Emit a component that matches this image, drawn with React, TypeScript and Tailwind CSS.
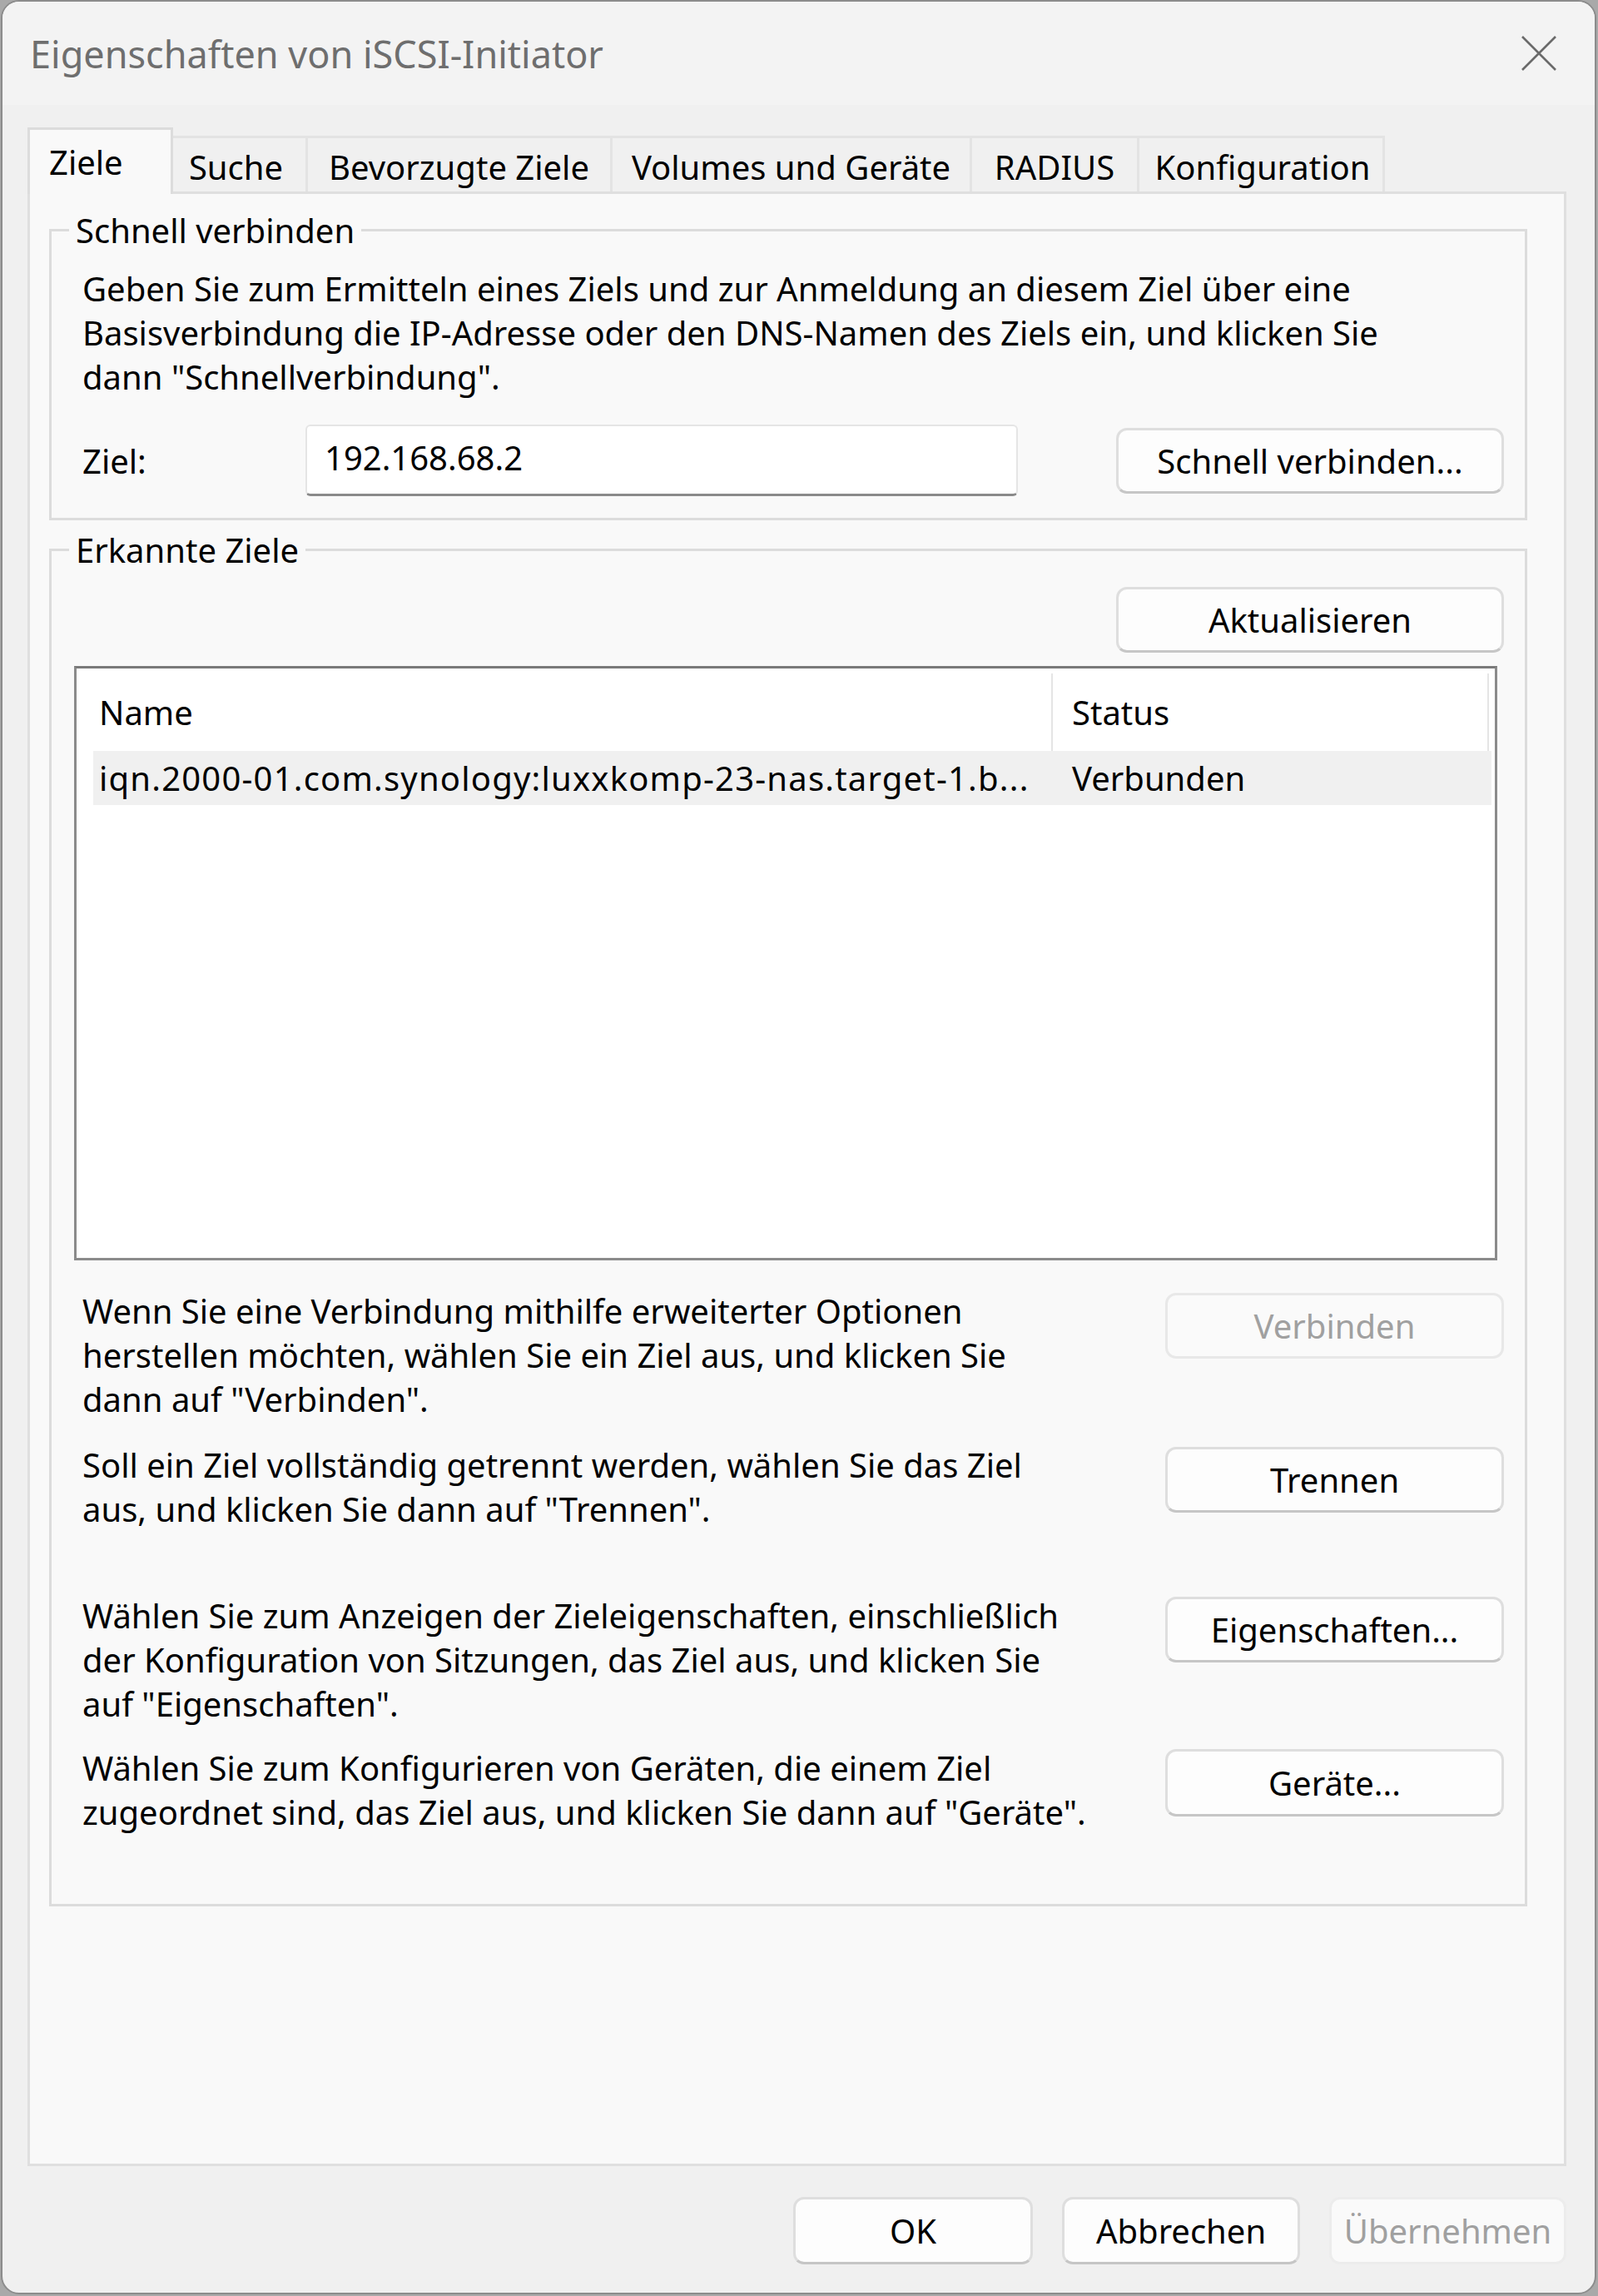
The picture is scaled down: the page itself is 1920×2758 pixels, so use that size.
import type { ReactNode } from "react";

function WinButton({
  children,
  className = "",
  disabled = false,
}: {
  children: ReactNode;
  className?: string;
  disabled?: boolean;
}) {
  return (
    <div
      className={`flex items-center justify-center rounded-[13px] border-[3px] ${
        disabled
          ? "border-[#e8e8e8] bg-[#fafafa] text-[#a0a0a0]"
          : "border-[#dedede] border-b-[#c6c6c6] bg-[#fdfdfd] text-black"
      } ${className}`}
    >
      {children}
    </div>
  );
}

function Tab({ label, className, active = false }: { label: string; className: string; active?: boolean }) {
  if (active) {
    return (
      <div
        className={`relative z-10 -mb-[3px] flex h-[80px] items-center border-[3px] border-b-0 border-[#dcdcdc] bg-[#f9f9f9] ${className}`}
      >
        {label}
      </div>
    );
  }
  return (
    <div
      className={`flex h-[67px] items-center justify-center border-t-[3px] border-r-[3px] border-[#e3e3e3] bg-[#f0f0f0] pt-[4px] ${className}`}
    >
      {label}
    </div>
  );
}

function Group({ title, children, className = "" }: { title: string; children: ReactNode; className?: string }) {
  return (
    <fieldset className={`ml-[23px] w-[1776px] border-[3px] border-[#dcdcdc] ${className}`}>
      <legend className="ml-[21px] px-[8px] leading-[53px]">{title}</legend>
      {children}
    </fieldset>
  );
}

export default function App() {
  return (
    <div className="h-[2758px] w-[1920px] bg-[#a9a9a9] font-['Noto_Sans',sans-serif] text-[40px] leading-[53px] text-black">
      <div className="ml-[1px] h-[2756px] w-[1917px] overflow-hidden rounded-[22px] border-2 border-[#8c8c8c] bg-[#f0f0f0]">
        {/* title bar */}
        <div className="flex h-[124px] items-center justify-between bg-[#f3f3f3] pl-[33px] pr-[46px]">
          <span className="text-[45px] text-[#6e6e6e]">Eigenschaften von iSCSI-Initiator</span>
          <svg width="42" height="42" viewBox="0 0 42 42" fill="none" stroke="#6a6a6a" strokeWidth="2.6">
            <path d="M1 1 L41 41 M41 1 L1 41" />
          </svg>
        </div>

        <div className="pl-[30px] pt-[27px]">
          {/* tabs */}
          <div className="flex items-end">
            <Tab label="Ziele" className="w-[175px] pl-[23px]" active />
            <Tab label="Suche" className="w-[162px] pr-[8px]" />
            <Tab label="Bevorzugte Ziele" className="w-[366px]" />
            <Tab label="Volumes und Geräte" className="w-[432px]" />
            <Tab label="RADIUS" className="w-[201px]" />
            <Tab label="Konfiguration" className="w-[295px] pl-[4px]" />
          </div>

          {/* tab page */}
          <div className="h-[2372px] w-[1849px] border-[3px] border-[#dfdfdf] bg-[#f9f9f9] pt-[17px]">
            <Group title="Schnell verbinden">
              <div className="pl-[37px] pr-[25px] pt-[17px] pb-[26px]">
                <p className="whitespace-nowrap">
                  Geben Sie zum Ermitteln eines Ziels und zur Anmeldung an diesem Ziel über eine
                  <br />
                  Basisverbindung die IP-Adresse oder den DNS-Namen des Ziels ein, und klicken Sie
                  <br />
                  dann "Schnellverbindung".
                </p>
                <div className="mt-[31px] flex items-center">
                  <span className="w-[268px]">Ziel:</span>
                  <div className="flex h-[86px] w-[856px] items-center rounded-[6px] border-2 border-b-[3px] border-[#e5e5e5] border-b-[#8a8a8a] bg-white pb-[6px] pl-[21px]">
                    192.168.68.2
                  </div>
                  <WinButton className="ml-auto h-[79px] w-[466px]">Schnell verbinden...</WinButton>
                </div>
              </div>
            </Group>

            <Group title="Erkannte Ziele" className="mt-[9px]">
              <div className="pl-[27px] pr-[25px] pt-[18px] pb-[84px]">
                <div className="flex justify-end">
                  <WinButton className="h-[79px] w-[466px]">Aktualisieren</WinButton>
                </div>

                {/* list view */}
                <div className="mt-[16px] h-[714px] w-[1710px] border-[3px] border-[#8b8b8b] border-t-[#7a7a7a] bg-white pl-[20px] pr-[4px]">
                  <div className="flex pt-[6px]">
                    <div className="flex h-[93px] w-[1151px] shrink-0 items-center pl-[7px]">Name</div>
                    <div className="flex h-[93px] w-[526px] shrink-0 items-center border-x-2 border-[#e5e5e5] pl-[23px]">
                      Status
                    </div>
                  </div>
                  <div className="flex h-[65px] w-[1680px] items-center bg-[#f0f0f0]">
                    <div className="w-[1153px] shrink-0 overflow-hidden whitespace-nowrap pl-[7px] tracking-[1.2px]">
                      iqn.2000-01.com.synology:luxxkomp-23-nas.target-1.b...
                    </div>
                    <div className="pl-[23px]">Verbunden</div>
                  </div>
                </div>

                <div className="mt-[34px] flex items-start justify-between pl-[10px]">
                  <p className="whitespace-nowrap">
                    Wenn Sie eine Verbindung mithilfe erweiterter Optionen
                    <br />
                    herstellen möchten, wählen Sie ein Ziel aus, und klicken Sie
                    <br />
                    dann auf "Verbinden".
                  </p>
                  <WinButton disabled className="mt-[5px] h-[79px] w-[407px]">
                    Verbinden
                  </WinButton>
                </div>

                <div className="mt-[26px] flex items-start justify-between pl-[10px]">
                  <p className="whitespace-nowrap">
                    Soll ein Ziel vollständig getrennt werden, wählen Sie das Ziel
                    <br />
                    aus, und klicken Sie dann auf "Trennen".
                  </p>
                  <WinButton className="mt-[5px] h-[79px] w-[407px]">Trennen</WinButton>
                </div>

                <div className="mt-[75px] flex items-start justify-between pl-[10px]">
                  <p className="whitespace-nowrap">
                    Wählen Sie zum Anzeigen der Zieleigenschaften, einschließlich
                    <br />
                    der Konfiguration von Sitzungen, das Ziel aus, und klicken Sie
                    <br />
                    auf "Eigenschaften".
                  </p>
                  <WinButton className="mt-[4px] h-[79px] w-[407px]">Eigenschaften...</WinButton>
                </div>

                <div className="mt-[24px] flex items-start justify-between pl-[10px]">
                  <p className="whitespace-nowrap">
                    Wählen Sie zum Konfigurieren von Geräten, die einem Ziel
                    <br />
                    zugeordnet sind, das Ziel aus, und klicken Sie dann auf "Geräte".
                  </p>
                  <WinButton className="mt-[4px] h-[81px] w-[407px]">Geräte...</WinButton>
                </div>
              </div>
            </Group>
          </div>

          {/* dialog buttons */}
          <div className="mt-[37px] flex w-[1849px] justify-end gap-[35px]">
            <WinButton className="h-[81px] w-[288px]">OK</WinButton>
            <WinButton className="h-[81px] w-[286px]">Abbrechen</WinButton>
            <WinButton disabled className="h-[81px] w-[285px] border-[#ececec] bg-[#f6f6f6]">
              Übernehmen
            </WinButton>
          </div>
        </div>
      </div>
    </div>
  );
}
